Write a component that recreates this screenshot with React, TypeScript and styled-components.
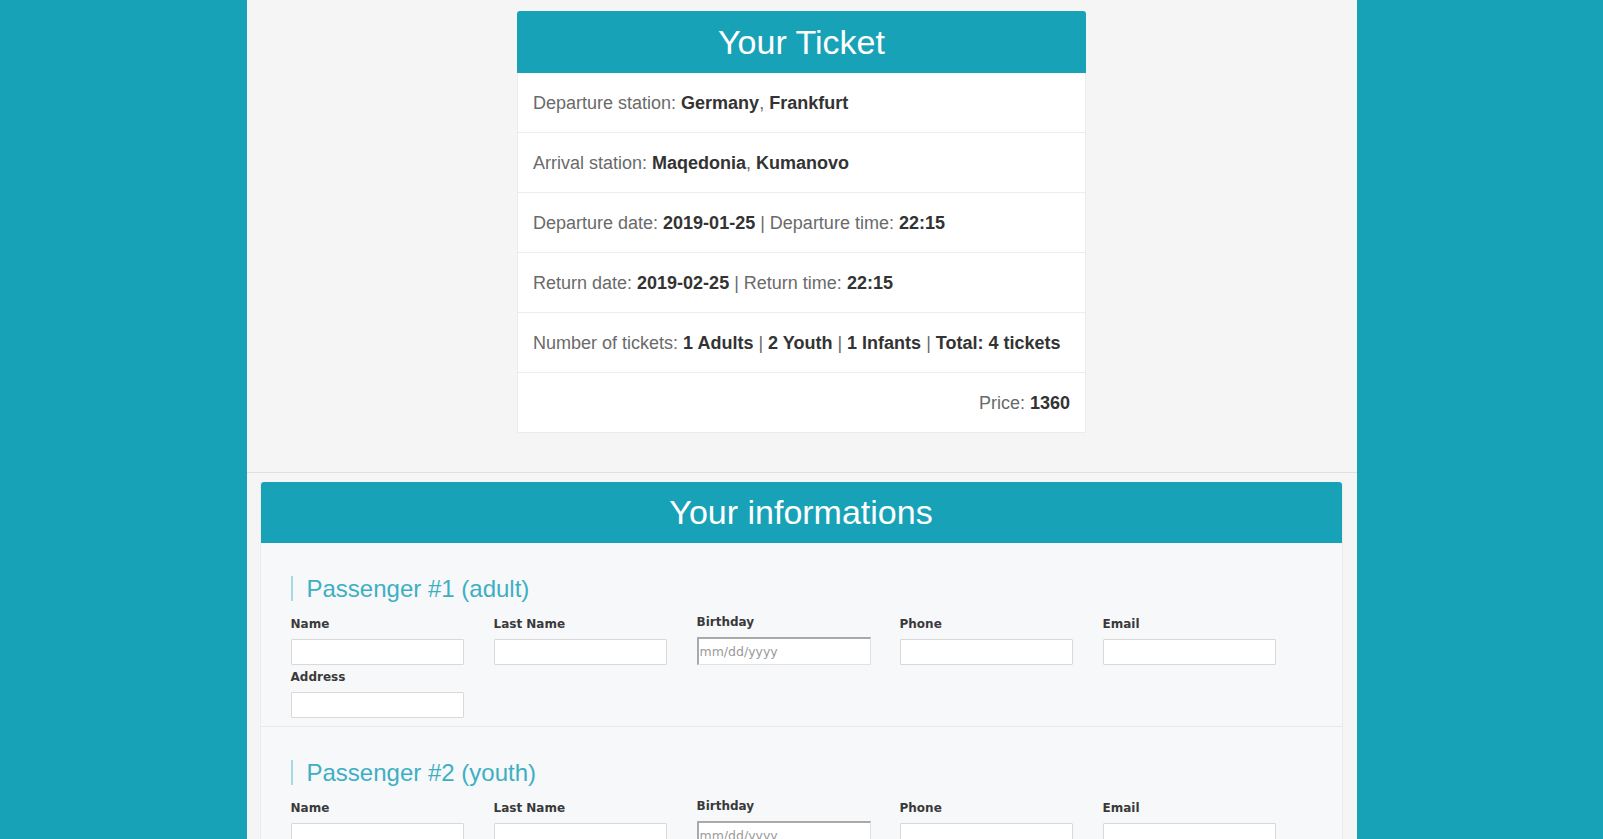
import React from "react";
import styled, { createGlobalStyle } from "styled-components";

const GlobalStyle = createGlobalStyle`
  html, body {
    margin: 0;
    padding: 0;
    background: #18a2b8;
  }
  * { box-sizing: border-box; }
`;

const Page = styled.div`
  width: 1110px;
  margin: 0 auto;
  background: #f5f5f5;
  min-height: 100vh;
  padding-top: 11px;
  padding-bottom: 40px;
`;

const TicketSection = styled.section`
  padding-bottom: 39px;
  border-bottom: 1px solid #e0e0e0;
`;

const Card = styled.div`
  width: 569px;
  margin: 0 auto;
  font-family: "Liberation Sans", Arial, sans-serif;
`;

const Banner = styled.h2<{ $h: number }>`
  margin: 0;
  height: ${(p) => p.$h}px;
  display: flex;
  align-items: center;
  justify-content: center;
  background: #18a2b8;
  color: #ffffff;
  font-family: "Liberation Sans", Arial, sans-serif;
  font-weight: 400;
  font-size: 34px;
  border-radius: 3px 3px 0 0;
`;

const TicketList = styled.ul`
  list-style: none;
  margin: 0;
  padding: 0;
  background: #ffffff;
  border-left: 1px solid #ececec;
  border-right: 1px solid #ececec;
`;

const TicketRow = styled.li<{ $right?: boolean }>`
  height: 60px;
  display: flex;
  align-items: center;
  justify-content: ${(p) => (p.$right ? "flex-end" : "flex-start")};
  padding: 2px 15px 0;
  border-bottom: 1px solid #ececec;
  font-size: 18px;
  color: #6a6a6a;
  white-space: nowrap;

  b {
    color: #333333;
    font-weight: 700;
  }
`;

const Sep = styled.span`
  white-space: pre;
`;

const InfoWrap = styled.section`
  padding: 9px 14px 0 13px;
`;

const InfoCard = styled.div`
  background: #f7f8fa;
  border-left: 1px solid #ececec;
  border-right: 1px solid #ececec;
`;

const InfoBanner = styled(Banner)`
  border-radius: 3px 3px 0 0;
`;

const Passenger = styled.div`
  padding: 33px 31px 8px 30px;
  border-bottom: 1px solid #e9e9e9;
`;

const PassengerTitle = styled.h3`
  margin: 0;
  height: 25px;
  line-height: 25px;
  padding-left: 14px;
  border-left: 2px solid #a6d9e2;
  font-family: "Liberation Sans", Arial, sans-serif;
  font-weight: 400;
  font-size: 24px;
  color: #3eafc3;
`;

const FieldGrid = styled.div`
  margin-top: 14px;
  display: grid;
  grid-template-columns: repeat(5, 173px);
  column-gap: 30px;
  row-gap: 5px;
  align-items: end;
`;

const Field = styled.label`
  display: flex;
  flex-direction: column;
  gap: 8px;
`;

const FieldLabel = styled.span`
  font-family: "DejaVu Sans", Verdana, sans-serif;
  font-weight: 700;
  font-size: 12px;
  line-height: 14px;
  color: #3a3a3a;
`;

const TextInput = styled.input`
  width: 173px;
  height: 26px;
  margin: 0;
  padding: 2px 4px;
  background: #ffffff;
  border: 1px solid #d9d9d9;
  border-radius: 1px;
  font-family: "DejaVu Sans", Verdana, sans-serif;
  font-size: 12.5px;
  outline: none;
`;

const DateInput = styled(TextInput)`
  width: 174px;
  height: 28px;
  padding: 1px 1px;
  border-width: 2px 1px 1px 2px;
  border-style: solid;
  border-color: #a9a9a9 #e2e2e2 #e2e2e2 #a9a9a9;
  border-radius: 0;

  &::placeholder {
    color: #9a9a9a;
  }
`;

const passengers = [
  { n: 1, kind: "adult" },
  { n: 2, kind: "youth" },
  { n: 3, kind: "youth" },
  { n: 4, kind: "infant" },
];

function PassengerForm({ n, kind }: { n: number; kind: string }) {
  return (
    <Passenger>
      <PassengerTitle>
        Passenger #{n} ({kind})
      </PassengerTitle>
      <FieldGrid>
        <Field>
          <FieldLabel>Name</FieldLabel>
          <TextInput type="text" />
        </Field>
        <Field>
          <FieldLabel>Last Name</FieldLabel>
          <TextInput type="text" />
        </Field>
        <Field>
          <FieldLabel>Birthday</FieldLabel>
          <DateInput type="text" placeholder="mm/dd/yyyy" />
        </Field>
        <Field>
          <FieldLabel>Phone</FieldLabel>
          <TextInput type="text" />
        </Field>
        <Field>
          <FieldLabel>Email</FieldLabel>
          <TextInput type="text" />
        </Field>
        <Field>
          <FieldLabel>Address</FieldLabel>
          <TextInput type="text" />
        </Field>
      </FieldGrid>
    </Passenger>
  );
}

export default function App() {
  return (
    <>
      <GlobalStyle />
      <Page>
        <TicketSection>
          <Card>
            <Banner $h={62}>Your Ticket</Banner>
            <TicketList>
              <TicketRow>
                Departure station:&nbsp;<b>Germany</b>,&nbsp;<b>Frankfurt</b>
              </TicketRow>
              <TicketRow>
                Arrival station:&nbsp;<b>Maqedonia</b>,&nbsp;<b>Kumanovo</b>
              </TicketRow>
              <TicketRow>
                Departure date:&nbsp;<b>2019-01-25</b>
                <Sep> | </Sep>Departure time:&nbsp;<b>22:15</b>
              </TicketRow>
              <TicketRow>
                Return date:&nbsp;<b>2019-02-25</b>
                <Sep> | </Sep>Return time:&nbsp;<b>22:15</b>
              </TicketRow>
              <TicketRow>
                Number of tickets:&nbsp;<b>1 Adults</b>
                <Sep> | </Sep>
                <b>2 Youth</b>
                <Sep> | </Sep>
                <b>1 Infants</b>
                <Sep> | </Sep>
                <b>Total: 4 tickets</b>
              </TicketRow>
              <TicketRow $right>
                Price:&nbsp;<b>1360</b>
              </TicketRow>
            </TicketList>
          </Card>
        </TicketSection>
        <InfoWrap>
          <InfoCard>
            <InfoBanner $h={61}>Your informations</InfoBanner>
            {passengers.map((p) => (
              <PassengerForm key={p.n} n={p.n} kind={p.kind} />
            ))}
          </InfoCard>
        </InfoWrap>
      </Page>
    </>
  );
}
